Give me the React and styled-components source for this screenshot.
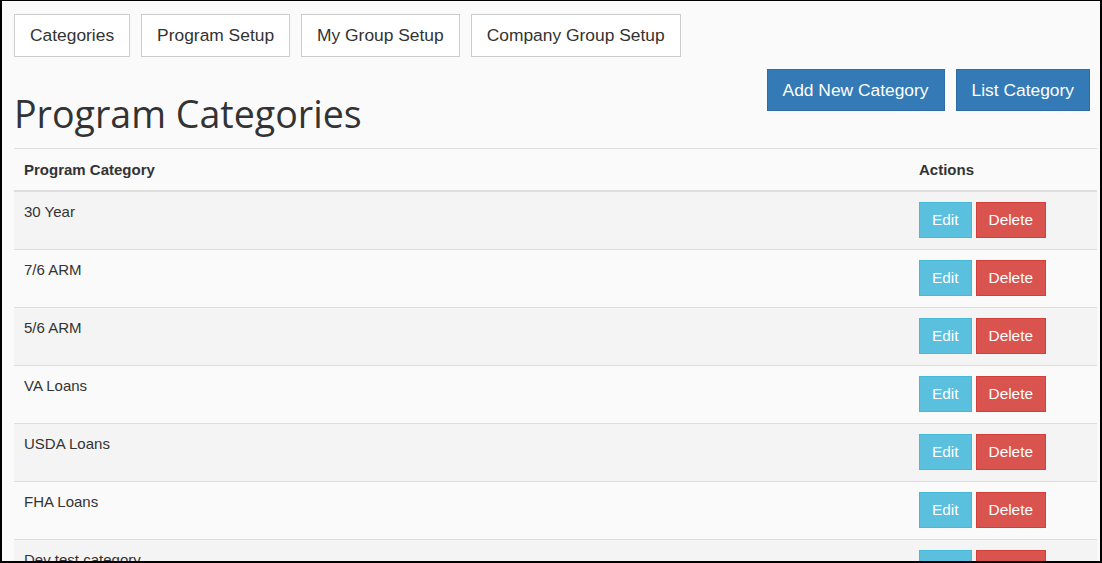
import React from "react"
import styled, { createGlobalStyle } from "styled-components"

const GlobalStyle = createGlobalStyle`
  html, body {
    margin: 0;
    height: 100%;
  }
  body {
    box-sizing: border-box;
    border: 2px solid #000;
    border-top-width: 1px;
    background: #fafafa;
    overflow: hidden;
    font-family: "Liberation Sans", Arial, sans-serif;
    color: #333;
  }
`

const Page = styled.div`
  padding: 13px 3px 0 12px;
`

const Tabs = styled.div`
  display: flex;
  gap: 11px;
`

const Tab = styled.button`
  height: 43px;
  padding: 0 15px;
  background: #fff;
  border: 1px solid #ccc;
  border-radius: 0;
  font-family: "Liberation Sans", Arial, sans-serif;
  font-size: 17.4px;
  color: #333;
  cursor: pointer;
`

const TitleBar = styled.div`
  display: flex;
  justify-content: space-between;
  align-items: flex-start;
  height: 91px;
`

const Title = styled.h1`
  align-self: flex-end;
  margin: 0 0 14px 0;
  font-family: "Open Sans", sans-serif;
  font-weight: 400;
  font-size: 37.6px;
  line-height: 40px;
  color: #333;
`

const Actions = styled.div`
  display: flex;
  gap: 11px;
  margin: 12px 7px 0 0;
`

const PrimaryButton = styled.button`
  height: 42px;
  padding: 0 15px;
  background: #337ab7;
  border: 1px solid #2e6da4;
  border-radius: 0;
  color: #fff;
  font-family: "Liberation Sans", Arial, sans-serif;
  font-size: 17.4px;
  cursor: pointer;
`

const Table = styled.table`
  width: 100%;
  border-collapse: collapse;
  font-size: 15px;
`

const HeadCell = styled.th`
  text-align: left;
  font-weight: 700;
  padding: 10px 10px;
  line-height: 21px;
  border-top: 1px solid #ddd;
  border-bottom: 2px solid #ddd;
  width: ${p => p.$width || "auto"};
`

const Row = styled.tr`
  background: ${p => (p.$striped ? "#f4f4f4" : "transparent")};
  border-bottom: 1px solid #ddd;
`

const Cell = styled.td`
  padding: 10px 10px 11px;
  line-height: 20px;
  vertical-align: top;
`

const ButtonRow = styled.div`
  display: flex;
  gap: 4px;
`

const SmallButton = styled.button`
  height: 36px;
  padding: 0 12px;
  border: 1px solid ${p => (p.$danger ? "#d43f3a" : "#46b8da")};
  background: ${p => (p.$danger ? "#d9534f" : "#5bc0de")};
  color: #fff;
  border-radius: 0;
  font-family: "Liberation Sans", Arial, sans-serif;
  font-size: 15.4px;
  cursor: pointer;
`

const categories = [
  "30 Year",
  "7/6 ARM",
  "5/6 ARM",
  "VA Loans",
  "USDA Loans",
  "FHA Loans",
  "Dev test category",
  "Jumbo Loans",
]

export default function App() {
  return (
    <>
      <GlobalStyle />
      <Page>
        <Tabs>
          <Tab>Categories</Tab>
          <Tab>Program Setup</Tab>
          <Tab>My Group Setup</Tab>
          <Tab>Company Group Setup</Tab>
        </Tabs>
        <TitleBar>
          <Title>Program Categories</Title>
          <Actions>
            <PrimaryButton>Add New Category</PrimaryButton>
            <PrimaryButton>List Category</PrimaryButton>
          </Actions>
        </TitleBar>
        <Table>
          <thead>
            <tr>
              <HeadCell>Program Category</HeadCell>
              <HeadCell $width="168px">Actions</HeadCell>
            </tr>
          </thead>
          <tbody>
            {categories.map((name, i) => (
              <Row key={name} $striped={i % 2 === 0}>
                <Cell>{name}</Cell>
                <Cell>
                  <ButtonRow>
                    <SmallButton>Edit</SmallButton>
                    <SmallButton $danger>Delete</SmallButton>
                  </ButtonRow>
                </Cell>
              </Row>
            ))}
          </tbody>
        </Table>
      </Page>
    </>
  )
}
